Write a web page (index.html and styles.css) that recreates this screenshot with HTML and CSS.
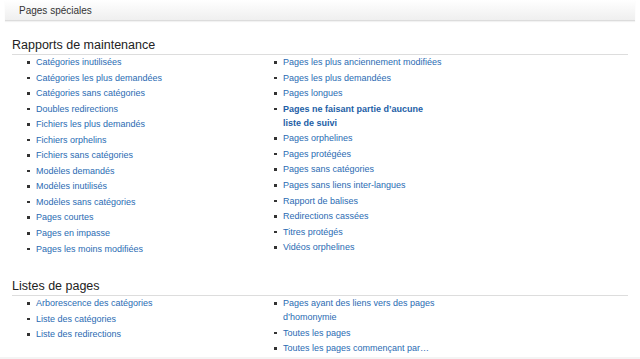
FILE: index.html
```html
<!DOCTYPE html>
<html lang="fr">
<head>
<meta charset="utf-8">
<title>Pages spéciales</title>
<link rel="stylesheet" href="styles.css">
</head>
<body>
<div class="topbar"><span class="title">Pages spéciales</span></div>
<div class="content">
  <h2 class="section-title">Rapports de maintenance</h2>
  <div class="cols">
    <ul class="col">
      <li><a href="#">Catégories inutilisées</a></li>
      <li><a href="#">Catégories les plus demandées</a></li>
      <li><a href="#">Catégories sans catégories</a></li>
      <li><a href="#">Doubles redirections</a></li>
      <li><a href="#">Fichiers les plus demandés</a></li>
      <li><a href="#">Fichiers orphelins</a></li>
      <li><a href="#">Fichiers sans catégories</a></li>
      <li><a href="#">Modèles demandés</a></li>
      <li><a href="#">Modèles inutilisés</a></li>
      <li><a href="#">Modèles sans catégories</a></li>
      <li><a href="#">Pages courtes</a></li>
      <li><a href="#">Pages en impasse</a></li>
      <li><a href="#">Pages les moins modifiées</a></li>
    </ul>
    <ul class="col">
      <li><a href="#">Pages les plus anciennement modifiées</a></li>
      <li><a href="#">Pages les plus demandées</a></li>
      <li><a href="#">Pages longues</a></li>
      <li><a href="#" class="strong">Pages ne faisant partie d’aucune liste de suivi</a></li>
      <li><a href="#">Pages orphelines</a></li>
      <li><a href="#">Pages protégées</a></li>
      <li><a href="#">Pages sans catégories</a></li>
      <li><a href="#">Pages sans liens inter-langues</a></li>
      <li><a href="#">Rapport de balises</a></li>
      <li><a href="#">Redirections cassées</a></li>
      <li><a href="#">Titres protégés</a></li>
      <li><a href="#">Vidéos orphelines</a></li>
    </ul>
  </div>
  <h2 class="section-title second">Listes de pages</h2>
  <div class="cols">
    <ul class="col">
      <li><a href="#">Arborescence des catégories</a></li>
      <li><a href="#">Liste des catégories</a></li>
      <li><a href="#">Liste des redirections</a></li>
    </ul>
    <ul class="col">
      <li><a href="#">Pages ayant des liens vers des pages d’homonymie</a></li>
      <li><a href="#">Toutes les pages</a></li>
      <li><a href="#">Toutes les pages commençant par…</a></li>
    </ul>
  </div>
</div>
<div class="footer-strip"></div>
</body>
</html>
```
FILE: styles.css
```css
html, body {
  margin: 0;
  padding: 0;
  background: #fff;
  font-family: "Liberation Sans", Arial, sans-serif;
  color: #333;
}
.topbar {
  margin: 0 5px;
  height: 20px;
  background: linear-gradient(#ffffff, #efefef);
  border-bottom: 1px solid #dcdcdc;
  box-shadow: 0 1px 1px rgba(0,0,0,0.05);
  display: flex;
  align-items: center;
}
.topbar .title {
  padding-left: 14px;
  font-size: 10px;
  color: #333;
}
.content {
  padding: 0 12px;
}
.section-title {
  margin: 17px 0 0;
  font-weight: normal;
  font-size: 12.5px;
  line-height: 15px;
  color: #222;
  border-bottom: 1px solid #dddddd;
  padding-bottom: 1px;
}
.section-title.second {
  margin-top: 22px;
}
.cols {
  display: grid;
  grid-template-columns: 247px 247px;
}
.col {
  list-style: none;
  margin: 0;
  padding: 0 0 0 24px;
}
.col li {
  position: relative;
  font-size: 9px;
  line-height: 14.2px;
  margin-bottom: 1.35px;
  max-width: 160px;
}
.col li::before {
  content: "";
  position: absolute;
  left: -9px;
  top: 6px;
  width: 2.5px;
  height: 2.5px;
  background: #333;
}
.col a {
  color: #2a6bb3;
  text-decoration: none;
}
.col a.strong {
  font-weight: bold;
  color: #1d5ea6;
}
.footer-strip {
  position: fixed;
  left: 0;
  right: 0;
  bottom: 0;
  height: 2px;
  background: #f4f4f4;
}
```
